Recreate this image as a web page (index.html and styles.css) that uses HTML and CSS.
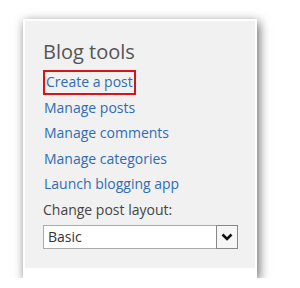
FILE: index.html
```html
<!DOCTYPE html>
<html lang="en">
<head>
    <meta charset="UTF-8">
    <title>Blog tools</title>
    <link rel="stylesheet" href="styles.css">
</head>
<body>

    <div class="tools-card">
        <div class="tools-inner">
            <h2>Blog tools</h2>
            <ul class="tool-links">
                <li><a href="#" class="current">Create a post</a></li>
                <li><a href="#">Manage posts</a></li>
                <li><a href="#">Manage comments</a></li>
                <li><a href="#">Manage categories</a></li>
                <li><a href="#">Launch blogging app</a></li>
            </ul>

            <!-- Layout picker -->
            <label class="layout-label">Change post layout:</label>
            <div class="layout-select">
                <span class="layout-value">Basic</span>
                <span class="layout-btn">
                    <svg width="14" height="10" viewBox="0 0 14 10"><path d="M2.5 2.5 L7 7 L11.5 2.5" fill="none" stroke="#111" stroke-width="2.6"/></svg>
                </span>
            </div>
        </div>
    </div>

</body>
</html>
```

FILE: styles.css
```css
body {
    margin: 0;
    background: #fff;
    font-family: "Open Sans", sans-serif;
}

/* White card with shadow */
.tools-card {
    width: 230px;
    margin: 19px 0 0 23px;
    padding: 2px 2px 10px 2px;
    background: #fff;
    box-shadow: 2px 3px 10px rgba(0, 0, 0, 0.6);
}

.tools-inner {
    background: #f1f1f1;
    padding: 18px 17px 19px 18px;
}

.tools-inner h2 {
    margin: 0 0 4px 0;
    font-size: 20px;
    font-weight: normal;
    line-height: 26px;
    color: #555;
}

/* Links */
.tool-links {
    list-style: none;
    margin: 0;
    padding: 0;
}

.tool-links li {
    height: 25.5px;
    line-height: 25.5px;
}

.tool-links a {
    color: #2f6cb5;
    text-decoration: none;
    font-size: 14px;
    padding: 0 1px;
}

.tool-links a.current {
    border: 2px solid #d8141b;
    padding: 0 1px 2px 1px;
}

.layout-label {
    display: block;
    font-size: 14px;
    line-height: 26px;
    color: #444;
}

/* Fake select box */
.layout-select {
    display: flex;
    height: 24px;
    border: 1px solid #aaa;
    background: #fff;
    box-sizing: border-box;
    margin-top: 2px;
}

.layout-value {
    flex: 1;
    padding-left: 4px;
    font-size: 14px;
    line-height: 22px;
    color: #333;
}

.layout-btn {
    width: 20px;
    border: 1px solid #888;
    margin: -1px -1px -1px 0;
    background: #f6f6f6;
    display: flex;
    align-items: center;
    justify-content: center;
}
```
